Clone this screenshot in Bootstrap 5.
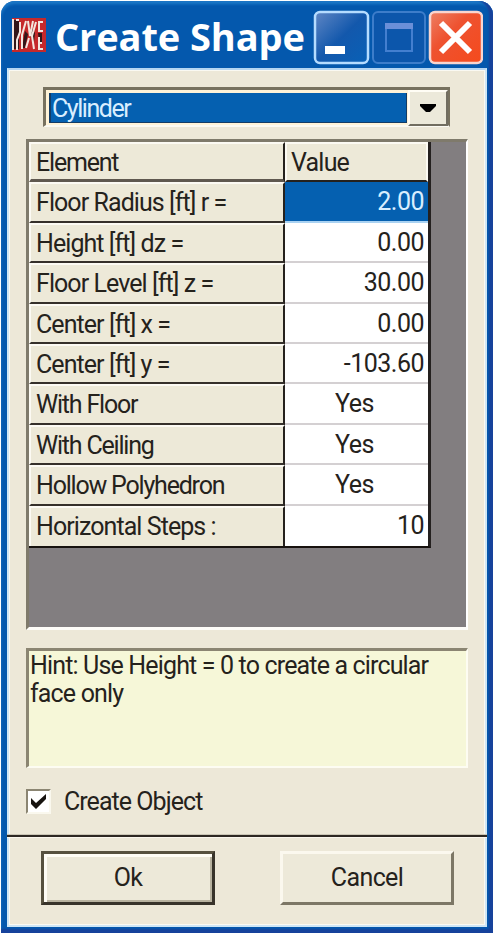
<!DOCTYPE html>
<html lang="en">
<head>
<meta charset="utf-8">
<title>Create Shape</title>
<link href="https://cdn.jsdelivr.net/npm/bootstrap@5.3.0/dist/css/bootstrap.min.css" rel="stylesheet">
<style>
body{margin:0;background:#fff;font-family:Roboto,"Liberation Sans",sans-serif;font-size:25px;line-height:27px;color:#25221c;overflow:hidden}
.window{width:492px;height:932px;margin:1px 0 0 1px;background:#0458ad;border-radius:14px 14px 0 0;padding:0 6px 6px;box-shadow:inset -5px 0 2px -1px #17429b,inset 0 -5px 2px -1px #17429b,inset 0 3px 3px #1d79c8}
.titlebar{height:67px;padding:1px 0 0 5px}
.caption{font:bold 38px/60px "Open Sans","Noto Sans",sans-serif;color:#fff;letter-spacing:-.1px;width:259px;margin:4px 0 0 9px}
.app-icon{margin-top:16px}
.win-buttons{margin:7px 0 0 -1px}
.client{height:859px;background:#ede8d8;border:2px solid #cfe6f5;border-top-color:#b5d6f2;box-shadow:inset 1px 1px #faf9f2,inset -1px -1px #faf9f2}
.combo{width:407px;height:40px;margin:17px 0 0 34px;border:3px solid #77715f;border-right-width:2px;border-bottom:2px solid #fbfaf3;background:#fff3d8;padding:3px 0 0 3px}
.combo-text{width:358px;height:30px;background:#0560b0;color:#d9eeff;border:1px solid #143c66;border-width:0 1px 1px 2px;padding-left:1px;line-height:32px;letter-spacing:-1.45px}
.combo-btn{width:40px;height:36px;margin-top:-3px;background:#ece9da;border:2px solid #fffdf5;border-right:2px solid #716d60;border-bottom:2px solid #716d60}
.grid-panel{width:442px;height:491px;margin:12px 0 0 17px;background:#827e80;border:3px solid #7f7a6b;border-right:2px solid #fff;border-bottom:3px solid #fdfcf8}
.sheet{width:402px;border-right:3px solid #24201f;border-bottom:3px solid #17120e;height:406px}
.line{height:40.4px}
.name-cell{width:256px;border:2px solid #fcfaf3;border-bottom:2px solid #35302a;border-right:2px solid #25211d;background:#ede9d8;padding-left:5px;line-height:38px;white-space:nowrap;letter-spacing:-1.2px}
.unit-cell{letter-spacing:-.93px}
.value-cell{width:143px;background:#fff;border-bottom:2px solid #d4d0d2;line-height:40px;padding-right:4px;letter-spacing:-.5px}
.head-cell{background:#ede9d8;border:2px solid #fcfaf3;border-bottom:2px solid #25211d;padding-left:4px;line-height:38px;letter-spacing:-.8px}
.line:first-child .name-cell{border-bottom:3px solid #5f584f}
.line:last-child .name-cell,.line:last-child .value-cell{border-bottom:0}
.picked{background:#0560b0;color:#d9eeff;border-bottom-color:#a9d2f2}
.hint{width:442px;height:120px;margin:18px 0 0 17px;background:#f6f7d8;border:3px solid #8b8572;border-right:2px solid #fdfcf2;border-bottom:2px solid #fdfcf2;padding:1px 0 0 1px;line-height:28px;letter-spacing:-.84px}
.tick{width:25px;height:25px;background:#fff;border:2px solid #8b8572;border-right-color:#faf8ee;border-bottom-color:#faf8ee}
.check-row{margin:16px 0 0 17px;height:35px}
.check-text{margin-left:13px;letter-spacing:-.95px}
.divider{height:4px;margin:15px -2px 0;background:#2d2822;border-top:1px solid #cbc6b6;border-bottom:1px solid #faf6ed}
.push{width:174px;height:54px;background:#ede9d9;line-height:48px;letter-spacing:-.6px}
.push-ok{border:3px solid #57513f;border-right-color:#38332a;border-bottom-color:#38332a;box-shadow:inset 3px 3px #fffdf5,inset -2px -2px #b8b29f}
.push-cancel{border:3px solid #fbf8ee;border-right-color:#7d7766;border-bottom-color:#7d7766}
.actions{padding:13px 31px 0 32px}
</style>
<script src="https://cdn.jsdelivr.net/npm/bootstrap@5.3.0/dist/js/bootstrap.bundle.min.js"></script>
</head>
<body>
<div class="window">
  <header class="titlebar d-flex align-items-start">
    <svg class="app-icon flex-shrink-0" width="34" height="34" viewBox="0 0 34 34"><path fill="#c5292b" d="M0 0h34v34H0z"/><path fill="#321619" d="M2 2h5v29H2zM13 13l3 3-3 14h-3zM19 9l4 6-1 9-4-7zM26 15h4v9h-3z"/><path fill="none" stroke="#f3e6df" stroke-width="2" d="M1 1v31M7 2H4M8 4v10l-3 8v10M14 3l-4 14v14M16 3l2 15 3-15M17 20l-3 10M24 4l-4 14 2 13M31 4h-4v9h4M27 19v12h4M27 25h3"/></svg>
    <span class="caption text-nowrap">Create Shape</span>
    <svg class="win-buttons flex-shrink-0" width="170" height="56" viewBox="313 8 170 56">
      <defs><linearGradient id="g1" x2="1" y2="1"><stop stop-color="#6087c5"/><stop offset=".5" stop-color="#1358ac"/><stop offset="1" stop-color="#0861b7"/></linearGradient><linearGradient id="g2" x2="1" y2="1"><stop stop-color="#ed8064"/><stop offset=".4" stop-color="#ee5230"/><stop offset="1" stop-color="#f54a1c"/></linearGradient></defs>
      <rect x="315" y="11" width="53" height="51" rx="5" fill="url(#g1)" stroke="#b5dcff" stroke-width="2.5"/><path fill="#fff" d="M325 45h20v8h-20z"/>
      <rect x="373" y="11" width="52" height="51" rx="5" fill="#0c56ab" stroke="#3d7dca" stroke-width="2"/><path fill="none" stroke="#437fd0" stroke-width="2" d="M386 23h26v27h-26z"/><path fill="#6a8fd8" d="M385 22h28v6h-28z"/>
      <rect x="430" y="11" width="52" height="51" rx="5" fill="url(#g2)" stroke="#f9d5cf" stroke-width="2.5"/><path stroke="#fff" stroke-width="6" d="m441 22 29 29m0-29-29 29"/>
    </svg>
  </header>
  <main class="client">
    <div class="combo d-flex"><div class="combo-text">Cylinder</div><div class="combo-btn d-flex align-items-center justify-content-center ms-auto"><svg width="16" height="10"><path d="M0 1h16v2l-6 6H6L0 3z"/></svg></div></div>
    <section class="grid-panel"><div class="sheet">
      <div class="line d-flex"><div class="name-cell">Element</div><div class="value-cell head-cell">Value</div></div>
      <div class="line d-flex"><div class="name-cell unit-cell">Floor Radius [ft] r =</div><div class="value-cell picked text-end">2.00</div></div>
      <div class="line d-flex"><div class="name-cell unit-cell">Height [ft] dz =</div><div class="value-cell text-end">0.00</div></div>
      <div class="line d-flex"><div class="name-cell unit-cell">Floor Level [ft] z =</div><div class="value-cell text-end">30.00</div></div>
      <div class="line d-flex"><div class="name-cell unit-cell">Center [ft] x =</div><div class="value-cell text-end">0.00</div></div>
      <div class="line d-flex"><div class="name-cell unit-cell">Center [ft] y =</div><div class="value-cell text-end">-103.60</div></div>
      <div class="line d-flex"><div class="name-cell">With Floor</div><div class="value-cell text-center">Yes</div></div>
      <div class="line d-flex"><div class="name-cell">With Ceiling</div><div class="value-cell text-center">Yes</div></div>
      <div class="line d-flex"><div class="name-cell">Hollow Polyhedron</div><div class="value-cell text-center">Yes</div></div>
      <div class="line d-flex"><div class="name-cell unit-cell">Horizontal Steps :</div><div class="value-cell text-end">10</div></div>
    </div></section>
    <div class="hint">Hint: Use Height = 0 to create a circular<br>face only</div>
    <label class="check-row d-flex align-items-center"><span class="tick d-flex align-items-center justify-content-center"><svg width="17" height="17"><path fill="#17130f" d="M1 5v6l5 5L16 6V1L6 10z"/></svg></span><span class="check-text">Create Object</span></label>
    <div class="divider"></div>
    <div class="actions d-flex justify-content-between"><div class="push push-ok text-center">Ok</div><div class="push push-cancel text-center">Cancel</div></div>
  </main>
</div>
</body>
</html>
